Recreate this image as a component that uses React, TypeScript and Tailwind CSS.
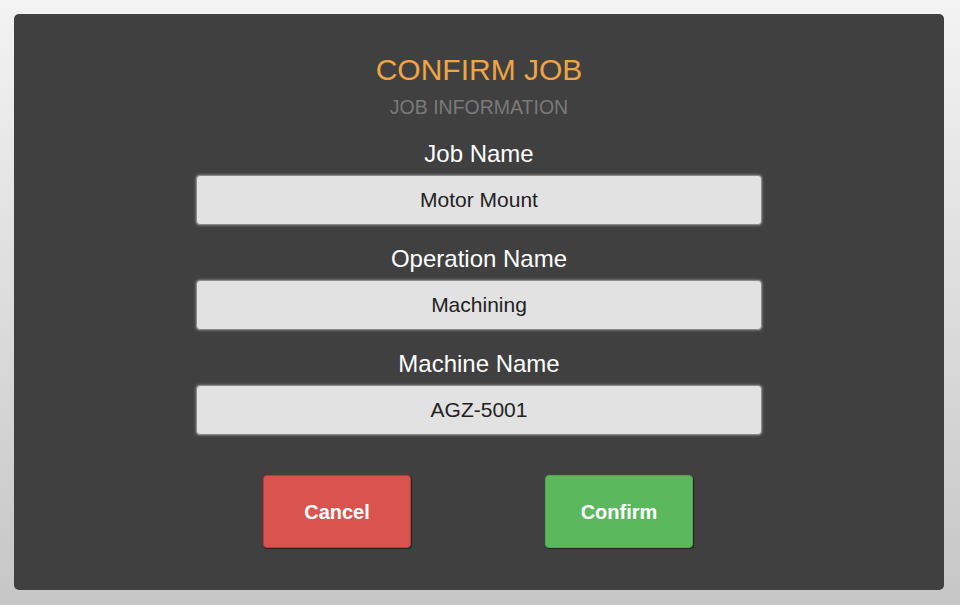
import React from "react";

const fields = [
  { label: "Job Name", value: "Motor Mount" },
  { label: "Operation Name", value: "Machining" },
  { label: "Machine Name", value: "AGZ-5001" },
];

export default function App() {
  return (
    <div
      className="w-[960px] h-[605px] p-[14px] bg-gradient-to-b from-[#f3f3f3] to-[#c6c6c6]"
      style={{ fontFamily: '"Liberation Sans", Arial, sans-serif' }}
    >
      <div className="h-[576px] w-[930px] rounded-[5px] bg-[#404040] flex flex-col items-center pt-[40px]">
        <div className="text-[30px] leading-[32px] text-[#f0a545]">CONFIRM JOB</div>
        <div className="mt-[11px] text-[19.5px] leading-[21px] text-[#7a7a7a]">JOB INFORMATION</div>
        <div className="mt-[1px] flex flex-col items-center">
          {fields.map((f, i) => (
            <div key={f.label} className={"flex flex-col items-center " + (i > 0 ? "mt-[21px]" : "mt-[22px]")}>
              <div className="text-[24px] leading-[25px] text-white">{f.label}</div>
              <div className="mt-[9px] w-[566px] h-[50px] rounded-[4px] bg-[#e2e2e2] border border-[#8a8a8a] shadow-[0_0_3px_#9a9a9a] flex items-center justify-center text-[21px] text-[#222]">
                {f.value}
              </div>
            </div>
          ))}
        </div>
        <div className="mt-[40px] mr-[2px] w-[430px] flex justify-between">
          <button className="w-[148px] h-[73px] rounded-[4px] bg-[#d9534f] border border-[#c13a36] shadow-[1px_1px_1px_rgba(0,0,0,0.45)] text-white font-bold text-[20px]">
            Cancel
          </button>
          <button className="w-[148px] h-[73px] rounded-[4px] bg-[#5cb85c] border border-[#4ea84e] shadow-[1px_1px_1px_rgba(0,0,0,0.45)] text-white font-bold text-[20px]">
            Confirm
          </button>
        </div>
      </div>
    </div>
  );
}
